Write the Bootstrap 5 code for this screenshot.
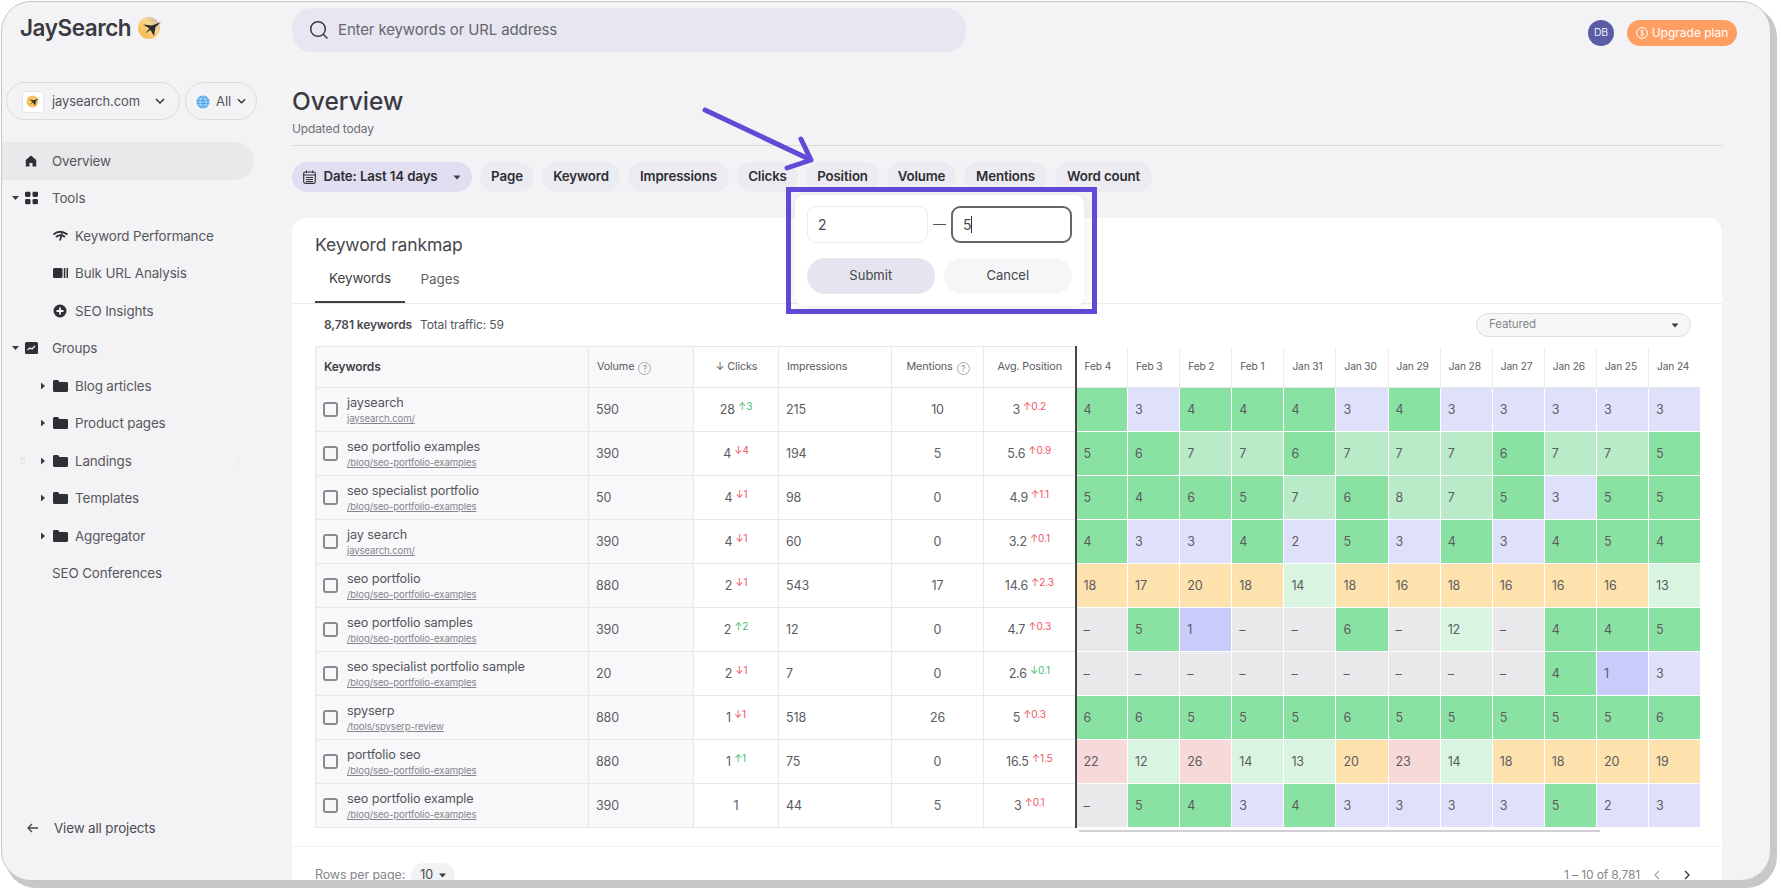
<!DOCTYPE html>
<html lang="en">
<head>
<meta charset="utf-8">
<title>JaySearch Overview</title>
<link href="https://cdn.jsdelivr.net/npm/bootstrap@5.3.0/dist/css/bootstrap.min.css" rel="stylesheet">
<style>
html,body{height:100%;overflow:hidden;background:#fff}
body{font-family:Inter,"Liberation Sans",sans-serif;font-size:13px;color:#55555a;letter-spacing:-.01em}
.shell{width:1770px;height:880px;margin:1px 0 0 1px;border:1px solid #c6c6c9;border-radius:30px;background:#f3f3f6;box-shadow:5px 6px 0 1px #c8c8ca;overflow:hidden;position:relative}
.side{width:290px;flex:0 0 290px;height:100%;padding-bottom:33px}
.logo-row{height:52px;margin-bottom:2px;padding-left:18px;gap:6px}
.logo-word{font-size:22.5px;font-weight:600;color:#3a3a40;letter-spacing:-.02em}
.sel-row{margin:26px 0 22px 4px;gap:5px;height:38px}
.sel-pill{height:38px;border:1px solid #dcdce0;border-radius:19px;color:#55555a;font-size:13px;gap:6px;padding-top:1px}
.sel-proj{width:174px;padding-right:14px;padding-left:15px}
.sel-all{width:72px;padding-right:10px;padding-left:10px}
.fav{width:22px;height:22px;background:#fff;border:1px solid #e6e6e8;border-radius:3px}
.tree-item{height:37.5px;font-size:13.4px;color:#57575c;padding-left:50px;position:relative}
.tree-item.on{background:#e9e9eb;border-radius:0 19px 19px 0;width:252px}
.tree-item.sub{padding-left:73px}
.t-ico{position:absolute;left:23px;top:50%;transform:translateY(-50%);display:block}
.sub .t-ico{left:51px}
.t-car{position:absolute;left:10px;top:50%;transform:translateY(-50%);display:block}
.sub .t-car{left:39px}
.back-row{height:37.5px;padding-left:25px;gap:16px;font-size:13.4px;color:#4c4c52;margin-top:auto}
.main-col{min-width:0;flex:1 1 0}
.topbar{height:50px;margin-top:6px;padding-right:33px}
.searchbox{width:674px;height:44px;background:#e7e7f1;border-radius:20px;padding-left:17px;gap:9px;font-size:15px;color:#66666c}
.ava{width:26px;height:26px;background:#5b5ba6;color:#e9e9ff;font-size:10.5px;margin-right:13px}
.upg{height:26px;width:110px;background:#ff9e63;color:#fff;font-size:12px;border-radius:13px;gap:4px;border:0;padding:0}
.work{margin-right:48px}
.pg-title{font-size:24.5px;font-weight:500;color:#3b3b41;margin:27px 0 0;line-height:32px;letter-spacing:0}
.pg-sub{font-size:12px;color:#6e6e74;margin-top:4px;line-height:16px}
.rule{border-top:1px solid #dadadd;margin-top:8px}
.chips{margin-top:16px;gap:8px;height:30px}
.chip{height:30px;border-radius:15px;background:#ebebf1;color:#2e2e33;font-size:13.3px;font-weight:600;padding:0;justify-content:center;display:flex;align-items:center}
.chip-date{width:180px;background:#e2def2;gap:7px}
.panel{margin-top:26px;background:#fff;border-radius:14px 14px 0 0;height:700px;position:relative}
.panel-title{font-size:17.5px;color:#47474d;padding:17px 0 0 23px;line-height:20px;font-weight:400;margin:0}
.tabs-row{border-bottom:1px solid #ebebee;height:49px;padding-left:23px}
.tabs-row .nav-link{height:48px;padding:0;color:#5f5f65;font-size:13.5px;display:flex;align-items:center;justify-content:center}
.tab-a{width:90px;color:#3f3f45!important;border-bottom:2px solid #3f3f45}
.tab-b{width:70px;margin-left:0}
.tool-row{height:42px;padding:0 31px 0 32px;font-size:12px}
.kw-num{font-weight:600;color:#4a4a50;margin-right:8px}
.feat{width:215px;height:24px;border:1px solid #dedee2;border-radius:12px;background:#f7f7f8;padding:0 11px 0 12px;color:#85858b;font-size:11.5px}
.rk-wrap{padding:0 23px}
.rk-table.table{table-layout:fixed;width:1385.2px;margin:0;--bs-table-bg:transparent;border-collapse:collapse;font-size:12.5px;color:#5c5c62}
.rk-table.table>thead>tr>th{height:41px;padding:0 7px 0 8px;font-weight:400;font-size:10.8px;border:1px solid #e8e8eb;vertical-align:middle;color:#5c5c62}
.rk-table.table>tbody>tr>td{height:44px;padding:2px 7px 0;border:1px solid #e8e8eb;vertical-align:middle}
.rk-table.table>tbody>tr>td.kw-c{padding:0 7px}
.rk-table.table>thead>tr>th.kw-h{font-weight:600;font-size:12px;color:#3f3f45}
.rk-table.table>*>tr>.soft{background:#f8f8fa}
.rk-table.table>*>tr>.avg{border-right:2px solid #45454a}
.rk-table.table>*>tr>.cen{text-align:center}
.rk-table.table>thead>tr>th.dt{border:0;border-left:1px solid #ececef;border-bottom:1px solid #e8e8eb;font-size:10.2px}
.rk-table.table>tbody>tr>td.hc{border:1px solid #fff}
.kw-wrap{gap:9px}
.tick{width:15px;height:15px;border:2px solid #8a8a8f;border-radius:3px;flex:none;margin:0;appearance:none;background:transparent}
.kw-t{font-size:12.7px;color:#55555a;line-height:15px;white-space:nowrap}
.kw-u{font-size:9.6px;color:#85858b;line-height:12px;text-decoration:underline;display:block;margin-top:3px;white-space:nowrap}
.qmark{display:inline-flex;width:13px;height:13px;border:1px solid #a9a9ae;border-radius:50%;font-size:8.5px;align-items:center;justify-content:center;color:#8b8b90;margin-left:4px;vertical-align:-2px}
.dl{font-size:10px;position:relative;top:-4px;margin-left:3px}
.up{color:#45bd6a}.dn{color:#f0555f}
.rk-table.table>tbody>tr>td.g1{background:#8ae2a2}
.rk-table.table>tbody>tr>td.g2{background:#b9ebc9}
.rk-table.table>tbody>tr>td.g3{background:#d9f5e2}
.rk-table.table>tbody>tr>td.p1{background:#dfe1fa}
.rk-table.table>tbody>tr>td.p2{background:#c9cbfb}
.rk-table.table>tbody>tr>td.o1{background:#fee2ae}
.rk-table.table>tbody>tr>td.r1{background:#f7d9da}
.rk-table.table>tbody>tr>td.n1{background:#e9e9eb}
.scrollish{height:2px;width:521px;background:#d0d0d3;margin:2px 0 0 764px}
.foot{border-top:1px solid #f0f0f2;margin-top:14px;padding:16px 23px 0;font-size:12.5px;color:#85858b}
.pager-txt{font-size:12px}
.chev-l{margin-left:13px}
.rows-chip{width:44px;height:24px;border-radius:12px;background:#f2f2f4;color:#45454a;margin-left:6px;gap:6px}
.pop-wrap{position:absolute;left:784px;top:185px;width:311px;height:127px;border:5px solid #5f4bd6;padding:3px 8px 3px 4px}
.pop-card{width:100%;height:100%;background:#fff;border-radius:9px;padding:11px 12px;box-shadow:0 4px 14px rgba(40,40,60,.08)}
.range{gap:5px;height:37px}
.num-box{width:121px;height:37px;border:1px solid #ececee;border-radius:9px;font-size:14px;color:#4a4a50;padding:0 10px;background:#fff;box-shadow:none}
.num-on{border:2px solid #66666a;display:flex;align-items:center}
.caret-bar{display:inline-block;width:1px;height:17px;background:#333}
.pop-btns{margin-top:15px;gap:9px}
.btn-sub,.btn-can{height:36px;border-radius:18px;border:0;font-size:13px;color:#46464c;padding:0}
.btn-sub{width:128px;background:#e5e5f0}
.btn-can{width:129px;background:#f6f6f8}
.arrow-mark{position:absolute;left:695px;top:100px}
.handle{position:absolute;top:50%;transform:translateY(-50%);color:#dcdce0;font-size:10px;line-height:1}
</style>
</head>
<body>
<div class="shell d-flex">
  <aside class="side d-flex flex-column">
    <div class="logo-row d-flex align-items-center">
      <span class="logo-word">JaySearch</span>
      <svg width="26" height="24" viewBox="0 0 26 24"><defs><linearGradient id="lg" x1="0" y1="1" x2="1" y2="0"><stop offset="0" stop-color="#fbb03b"/><stop offset=".6" stop-color="#f9d58a"/><stop offset="1" stop-color="#b9b0c0"/></linearGradient></defs><circle cx="12" cy="12" r="11" fill="url(#lg)"/><path d="M6 8.500L15 9.500 24 6 18.500 11 17 20 13.500 14 8 17.500 12.500 12.500z" fill="#2b2b30"/></svg>
    </div>
    <div class="sel-row d-flex">
      <div class="sel-pill sel-proj d-flex align-items-center justify-content-between">
        <span class="d-flex align-items-center gap-2"><span class="fav d-flex align-items-center justify-content-center"><svg width="14" height="13" viewBox="0 0 26 24"><circle cx="12" cy="12" r="11" fill="#f9c25d"/><path d="M6 8.500L15 9.500 24 6 18.500 11 17 20 13.500 14 8 17.500 12.500 12.500z" fill="#2b2b30"/></svg></span>jaysearch.com</span>
        <svg width="10" height="7" viewBox="0 0 10 7"><path d="M1 1l4 4 4-4" fill="none" stroke="#333" stroke-width="1.5"/></svg>
      </div>
      <div class="sel-pill sel-all d-flex align-items-center justify-content-between">
        <svg width="14" height="14" viewBox="0 0 14 14"><circle cx="7" cy="7" r="6.5" fill="#4aa3e8"/><path d="M.5 7h13M7 .5c-4 4-4 9 0 13M7 .5c4 4 4 9 0 13M1.5 4h11M1.5 10h11" fill="none" stroke="#d5ecfb" stroke-width=".7"/></svg>
        <span>All</span>
        <svg width="9" height="7" viewBox="0 0 10 7"><path d="M1 1l4 4 4-4" fill="none" stroke="#333" stroke-width="1.5"/></svg>
      </div>
    </div>
    <div class="tree-item on d-flex align-items-center"><svg class="t-ico" width="12" height="12" viewBox="0 0 12 12"><path d="M6 .5L.8 5v6.5h3.7V8h3v3.5h3.7V5z" fill="#2f2f35"/></svg>Overview</div>
    <div class="tree-item d-flex align-items-center"><svg class="t-car" width="7" height="5" viewBox="0 0 7 5"><path d="M0 .5h7L3.5 4.5z" fill="#3a3a40"/></svg><svg class="t-ico" width="13" height="13" viewBox="0 0 13 13"><g fill="#2f2f35"><rect x="0" y="0" width="5.5" height="5.5" rx="1.4"/><rect x="7.5" y="0" width="5.5" height="5.5" rx="1.4"/><rect x="0" y="7.5" width="5.5" height="5.5" rx="1.4"/><rect x="7.5" y="7.5" width="5.5" height="5.5" rx="1.4"/></g></svg>Tools</div>
    <div class="tree-item sub d-flex align-items-center"><svg class="t-ico" width="15" height="11" viewBox="0 0 15 11"><path d="M.5 4c4-3.500 9-3.500 14 0M3 6.500c3-2.500 6-2.500 9 0M7 10l2-7" fill="none" stroke="#2f2f35" stroke-width="1.800"/></svg>Keyword Performance</div>
    <div class="tree-item sub d-flex align-items-center"><svg class="t-ico" width="15" height="10" viewBox="0 0 15 10"><rect width="9.500" height="10" rx="1.500" fill="#2f2f35"/><rect x="10.800" width="1.500" height="10" fill="#2f2f35"/><rect x="13.500" width="1.500" height="10" fill="#2f2f35"/></svg>Bulk URL Analysis</div>
    <div class="tree-item sub d-flex align-items-center"><svg class="t-ico" width="14" height="14" viewBox="0 0 14 14"><circle cx="7" cy="7" r="6.500" fill="#2f2f35"/><path d="M7 3.500v7M3.500 7h7" stroke="#f3f3f6" stroke-width="1.800"/></svg>SEO Insights</div>
    <div class="tree-item d-flex align-items-center"><svg class="t-car" width="7" height="5" viewBox="0 0 7 5"><path d="M0 .5h7L3.500 4.500z" fill="#3a3a40"/></svg><svg class="t-ico" width="13" height="12" viewBox="0 0 13 12"><rect width="13" height="12" rx="1.500" fill="#2f2f35"/><path d="M2.500 8l2.500-2 2 1 3-3" fill="none" stroke="#f3f3f6" stroke-width="1.200"/></svg>Groups</div>
    <div class="tree-item sub d-flex align-items-center"><svg class="t-car" width="4" height="7" viewBox="0 0 4 7"><path d="M0 0l4 3.500L0 7z" fill="#3a3a40"/></svg><svg class="t-ico" width="15" height="12" viewBox="0 0 15 12"><path d="M0 1.500C0 .7.600 0 1.500 0h3.500l1.500 2h7C14.400 2 15 2.700 15 3.500v7c0 .8-.6 1.500-1.500 1.500h-12C.600 12 0 11.300 0 10.500z" fill="#2f2f35"/></svg>Blog articles</div>
    <div class="tree-item sub d-flex align-items-center"><svg class="t-car" width="4" height="7" viewBox="0 0 4 7"><path d="M0 0l4 3.500L0 7z" fill="#3a3a40"/></svg><svg class="t-ico" width="15" height="12" viewBox="0 0 15 12"><path d="M0 1.500C0 .7.600 0 1.500 0h3.500l1.500 2h7C14.400 2 15 2.700 15 3.500v7c0 .8-.6 1.500-1.500 1.500h-12C.600 12 0 11.300 0 10.500z" fill="#2f2f35"/></svg>Product pages</div>
    <div class="tree-item sub d-flex align-items-center"><span class="handle" style="left:17px">⠿</span><svg class="t-car" width="4" height="7" viewBox="0 0 4 7"><path d="M0 0l4 3.500L0 7z" fill="#3a3a40"/></svg><svg class="t-ico" width="15" height="12" viewBox="0 0 15 12"><path d="M0 1.500C0 .7.600 0 1.500 0h3.500l1.500 2h7C14.400 2 15 2.700 15 3.500v7c0 .8-.6 1.500-1.500 1.500h-12C.600 12 0 11.300 0 10.500z" fill="#2f2f35"/></svg>Landings<span class="handle" style="left:231px">⋮</span></div>
    <div class="tree-item sub d-flex align-items-center"><svg class="t-car" width="4" height="7" viewBox="0 0 4 7"><path d="M0 0l4 3.500L0 7z" fill="#3a3a40"/></svg><svg class="t-ico" width="15" height="12" viewBox="0 0 15 12"><path d="M0 1.500C0 .7.600 0 1.500 0h3.500l1.500 2h7C14.400 2 15 2.700 15 3.500v7c0 .8-.6 1.500-1.500 1.500h-12C.600 12 0 11.300 0 10.500z" fill="#2f2f35"/></svg>Templates</div>
    <div class="tree-item sub d-flex align-items-center"><svg class="t-car" width="4" height="7" viewBox="0 0 4 7"><path d="M0 0l4 3.500L0 7z" fill="#3a3a40"/></svg><svg class="t-ico" width="15" height="12" viewBox="0 0 15 12"><path d="M0 1.500C0 .7.600 0 1.500 0h3.500l1.500 2h7C14.400 2 15 2.700 15 3.500v7c0 .8-.6 1.500-1.500 1.500h-12C.600 12 0 11.300 0 10.500z" fill="#2f2f35"/></svg>Aggregator</div>
    <div class="tree-item d-flex align-items-center">SEO Conferences</div>
    <div class="back-row d-flex align-items-center"><svg width="11" height="10" viewBox="0 0 11 10"><path d="M5 1L1 5l4 4M1 5h10" fill="none" stroke="#444" stroke-width="1.300"/></svg>View all projects</div>
  </aside>
  <div class="main-col">
    <div class="topbar d-flex align-items-start justify-content-between">
      <div class="searchbox d-flex align-items-center"><svg width="20" height="20" viewBox="0 0 20 20"><circle cx="9" cy="9" r="7.300" fill="none" stroke="#3a3a40" stroke-width="1.500"/><path d="M14.500 14.500l4 4" stroke="#3a3a40" stroke-width="1.500"/></svg>Enter keywords or URL address</div>
      <div class="d-flex align-items-center mt-2 pt-1">
        <span class="ava rounded-circle d-flex align-items-center justify-content-center">DB</span>
        <button type="button" class="upg btn d-flex align-items-center justify-content-center"><svg width="12" height="12" viewBox="0 0 12 12"><circle cx="6" cy="6" r="5.400" fill="none" stroke="#fff"/><path d="M7.800 4.200C7.300 3.400 4.500 3.200 4.500 4.600S7.800 5.700 7.800 7.300 4.700 8.700 4.200 7.800M6 2.500v7" fill="none" stroke="#fff" stroke-width=".7"/></svg>Upgrade plan</button>
      </div>
    </div>
    <div class="work">
      <h1 class="pg-title">Overview</h1>
      <div class="pg-sub">Updated today</div>
      <div class="rule"></div>
      <div class="chips d-flex">
        <div class="chip chip-date"><svg width="13" height="14" viewBox="0 0 13 14"><rect x=".7" y="2" width="11.600" height="11.300" rx="1.500" fill="none" stroke="#333" stroke-width="1.200"/><path d="M.7 5h11.600M3.500 .5v2.500M9.500 .5v2.500M3 7.500h7M3 9.500h7M3 11.500h7" stroke="#333"/></svg>Date: Last 14 days<svg class="ms-2" width="8" height="5" viewBox="0 0 7 5"><path d="M0 .5h7L3.500 4.500z" fill="#3a3a40"/></svg></div>
        <div class="chip" style="width:54px">Page</div>
        <div class="chip" style="width:78px">Keyword</div>
        <div class="chip" style="width:101px">Impressions</div>
        <div class="chip" style="width:61px">Clicks</div>
        <div class="chip" style="width:73px">Position</div>
        <div class="chip" style="width:69px">Volume</div>
        <div class="chip" style="width:83px">Mentions</div>
        <div class="chip" style="width:97px">Word count</div>
      </div>
      <section class="panel">
        <h2 class="panel-title">Keyword rankmap</h2>
        <ul class="nav tabs-row">
          <li class="nav-item"><a class="nav-link tab-a" href="#">Keywords</a></li>
          <li class="nav-item"><a class="nav-link tab-b" href="#">Pages</a></li>
        </ul>
        <div class="tool-row d-flex align-items-center justify-content-between">
          <div><span class="kw-num">8,781 keywords</span>Total traffic: 59</div>
          <div class="feat d-flex align-items-center justify-content-between">Featured<svg width="8" height="5" viewBox="0 0 7 5"><path d="M0 .5h7L3.500 4.500z" fill="#3a3a40"/></svg></div>
        </div>
        <div class="rk-wrap">
          <table class="table rk-table">
            <colgroup><col style="width:273px"><col style="width:105px"><col style="width:85px"><col style="width:113px"><col style="width:92px"><col style="width:92px"><col span="12" style="width:52.1px"></colgroup>
            <thead><tr>
              <th class="soft kw-h">Keywords</th><th class="soft">Volume<span class="qmark">?</span></th><th class="cen">↓ Clicks</th><th>Impressions</th><th class="cen">Mentions<span class="qmark">?</span></th><th class="cen avg">Avg. Position</th>
              <th class="dt">Feb 4</th><th class="dt">Feb 3</th><th class="dt">Feb 2</th><th class="dt">Feb 1</th><th class="dt">Jan 31</th><th class="dt">Jan 30</th><th class="dt">Jan 29</th><th class="dt">Jan 28</th><th class="dt">Jan 27</th><th class="dt">Jan 26</th><th class="dt">Jan 25</th><th class="dt">Jan 24</th>
            </tr></thead>
            <tbody>
              <tr><td class="soft kw-c"><div class="kw-wrap d-flex align-items-center"><input class="tick" type="checkbox"><div><div class="kw-t">jaysearch</div><a class="kw-u" href="#">jaysearch.com/</a></div></div></td><td class="soft">590</td><td class="cen">28<span class="dl up">↑3</span></td><td>215</td><td class="cen">10</td><td class="cen avg">3<span class="dl dn">↑0.2</span></td><td class="hc g1">4</td><td class="hc p1">3</td><td class="hc g1">4</td><td class="hc g1">4</td><td class="hc g1">4</td><td class="hc p1">3</td><td class="hc g1">4</td><td class="hc p1">3</td><td class="hc p1">3</td><td class="hc p1">3</td><td class="hc p1">3</td><td class="hc p1">3</td></tr>
              <tr><td class="soft kw-c"><div class="kw-wrap d-flex align-items-center"><input class="tick" type="checkbox"><div><div class="kw-t">seo portfolio examples</div><a class="kw-u" href="#">/blog/seo-portfolio-examples</a></div></div></td><td class="soft">390</td><td class="cen">4<span class="dl dn">↓4</span></td><td>194</td><td class="cen">5</td><td class="cen avg">5.6<span class="dl dn">↑0.9</span></td><td class="hc g1">5</td><td class="hc g1">6</td><td class="hc g2">7</td><td class="hc g2">7</td><td class="hc g1">6</td><td class="hc g2">7</td><td class="hc g2">7</td><td class="hc g2">7</td><td class="hc g1">6</td><td class="hc g2">7</td><td class="hc g2">7</td><td class="hc g1">5</td></tr>
              <tr><td class="soft kw-c"><div class="kw-wrap d-flex align-items-center"><input class="tick" type="checkbox"><div><div class="kw-t">seo specialist portfolio</div><a class="kw-u" href="#">/blog/seo-portfolio-examples</a></div></div></td><td class="soft">50</td><td class="cen">4<span class="dl dn">↓1</span></td><td>98</td><td class="cen">0</td><td class="cen avg">4.9<span class="dl dn">↑1.1</span></td><td class="hc g1">5</td><td class="hc g1">4</td><td class="hc g1">6</td><td class="hc g1">5</td><td class="hc g2">7</td><td class="hc g1">6</td><td class="hc g2">8</td><td class="hc g2">7</td><td class="hc g1">5</td><td class="hc p1">3</td><td class="hc g1">5</td><td class="hc g1">5</td></tr>
              <tr><td class="soft kw-c"><div class="kw-wrap d-flex align-items-center"><input class="tick" type="checkbox"><div><div class="kw-t">jay search</div><a class="kw-u" href="#">jaysearch.com/</a></div></div></td><td class="soft">390</td><td class="cen">4<span class="dl dn">↓1</span></td><td>60</td><td class="cen">0</td><td class="cen avg">3.2<span class="dl dn">↑0.1</span></td><td class="hc g1">4</td><td class="hc p1">3</td><td class="hc p1">3</td><td class="hc g1">4</td><td class="hc p1">2</td><td class="hc g1">5</td><td class="hc p1">3</td><td class="hc g1">4</td><td class="hc p1">3</td><td class="hc g1">4</td><td class="hc g1">5</td><td class="hc g1">4</td></tr>
              <tr><td class="soft kw-c"><div class="kw-wrap d-flex align-items-center"><input class="tick" type="checkbox"><div><div class="kw-t">seo portfolio</div><a class="kw-u" href="#">/blog/seo-portfolio-examples</a></div></div></td><td class="soft">880</td><td class="cen">2<span class="dl dn">↓1</span></td><td>543</td><td class="cen">17</td><td class="cen avg">14.6<span class="dl dn">↑2.3</span></td><td class="hc o1">18</td><td class="hc o1">17</td><td class="hc o1">20</td><td class="hc o1">18</td><td class="hc g3">14</td><td class="hc o1">18</td><td class="hc o1">16</td><td class="hc o1">18</td><td class="hc o1">16</td><td class="hc o1">16</td><td class="hc o1">16</td><td class="hc g3">13</td></tr>
              <tr><td class="soft kw-c"><div class="kw-wrap d-flex align-items-center"><input class="tick" type="checkbox"><div><div class="kw-t">seo portfolio samples</div><a class="kw-u" href="#">/blog/seo-portfolio-examples</a></div></div></td><td class="soft">390</td><td class="cen">2<span class="dl up">↑2</span></td><td>12</td><td class="cen">0</td><td class="cen avg">4.7<span class="dl dn">↑0.3</span></td><td class="hc n1">–</td><td class="hc g1">5</td><td class="hc p2">1</td><td class="hc n1">–</td><td class="hc n1">–</td><td class="hc g1">6</td><td class="hc n1">–</td><td class="hc g3">12</td><td class="hc n1">–</td><td class="hc g1">4</td><td class="hc g1">4</td><td class="hc g1">5</td></tr>
              <tr><td class="soft kw-c"><div class="kw-wrap d-flex align-items-center"><input class="tick" type="checkbox"><div><div class="kw-t">seo specialist portfolio sample</div><a class="kw-u" href="#">/blog/seo-portfolio-examples</a></div></div></td><td class="soft">20</td><td class="cen">2<span class="dl dn">↓1</span></td><td>7</td><td class="cen">0</td><td class="cen avg">2.6<span class="dl up">↓0.1</span></td><td class="hc n1">–</td><td class="hc n1">–</td><td class="hc n1">–</td><td class="hc n1">–</td><td class="hc n1">–</td><td class="hc n1">–</td><td class="hc n1">–</td><td class="hc n1">–</td><td class="hc n1">–</td><td class="hc g1">4</td><td class="hc p2">1</td><td class="hc p1">3</td></tr>
              <tr><td class="soft kw-c"><div class="kw-wrap d-flex align-items-center"><input class="tick" type="checkbox"><div><div class="kw-t">spyserp</div><a class="kw-u" href="#">/tools/spyserp-review</a></div></div></td><td class="soft">880</td><td class="cen">1<span class="dl dn">↓1</span></td><td>518</td><td class="cen">26</td><td class="cen avg">5<span class="dl dn">↑0.3</span></td><td class="hc g1">6</td><td class="hc g1">6</td><td class="hc g1">5</td><td class="hc g1">5</td><td class="hc g1">5</td><td class="hc g1">6</td><td class="hc g1">5</td><td class="hc g1">5</td><td class="hc g1">5</td><td class="hc g1">5</td><td class="hc g1">5</td><td class="hc g1">6</td></tr>
              <tr><td class="soft kw-c"><div class="kw-wrap d-flex align-items-center"><input class="tick" type="checkbox"><div><div class="kw-t">portfolio seo</div><a class="kw-u" href="#">/blog/seo-portfolio-examples</a></div></div></td><td class="soft">880</td><td class="cen">1<span class="dl up">↑1</span></td><td>75</td><td class="cen">0</td><td class="cen avg">16.5<span class="dl dn">↑1.5</span></td><td class="hc r1">22</td><td class="hc g3">12</td><td class="hc r1">26</td><td class="hc g3">14</td><td class="hc g3">13</td><td class="hc o1">20</td><td class="hc r1">23</td><td class="hc g3">14</td><td class="hc o1">18</td><td class="hc o1">18</td><td class="hc o1">20</td><td class="hc o1">19</td></tr>
              <tr><td class="soft kw-c"><div class="kw-wrap d-flex align-items-center"><input class="tick" type="checkbox"><div><div class="kw-t">seo portfolio example</div><a class="kw-u" href="#">/blog/seo-portfolio-examples</a></div></div></td><td class="soft">390</td><td class="cen">1</td><td>44</td><td class="cen">5</td><td class="cen avg">3<span class="dl dn">↑0.1</span></td><td class="hc n1">–</td><td class="hc g1">5</td><td class="hc g1">4</td><td class="hc p1">3</td><td class="hc g1">4</td><td class="hc p1">3</td><td class="hc p1">3</td><td class="hc p1">3</td><td class="hc p1">3</td><td class="hc g1">5</td><td class="hc p1">2</td><td class="hc p1">3</td></tr>
            </tbody>
          </table>
          <div class="scrollish"></div>
        </div>
        <div class="foot d-flex align-items-center justify-content-between">
          <div class="d-flex align-items-center">Rows per page:<span class="rows-chip d-flex align-items-center justify-content-center">10<svg width="7" height="5" viewBox="0 0 7 5"><path d="M0 .5h7L3.500 4.500z" fill="#3a3a40"/></svg></span></div>
          <div class="d-flex align-items-center me-2"><span class="pager-txt">1 – 10 of 8,781</span><svg class="chev-l" width="7" height="10" viewBox="0 0 7 10"><path d="M6 1L2 5l4 4" fill="none" stroke="#aaa" stroke-width="1.300"/></svg><svg class="ms-4" width="7" height="10" viewBox="0 0 7 10"><path d="M1 1l4 4-4 4" fill="none" stroke="#333" stroke-width="1.300"/></svg></div>
        </div>
      </section>
    </div>
  </div>
  <svg class="arrow-mark" width="125" height="75" viewBox="0 0 125 75"><path d="M8 8L114 58M104 37L114 58L90 66" fill="none" stroke="#5f4bd6" stroke-width="5" stroke-linecap="round" stroke-linejoin="round"/></svg>
  <div class="pop-wrap">
    <div class="pop-card">
      <div class="range d-flex align-items-center">
        <input class="form-control num-box" type="text" value="2" aria-label="From">
        <span>—</span>
        <div class="form-control num-box num-on">5<span class="caret-bar"></span></div>
      </div>
      <div class="pop-btns d-flex">
        <button type="button" class="btn btn-sub">Submit</button>
        <button type="button" class="btn btn-can">Cancel</button>
      </div>
    </div>
  </div>
</div>
<script src="https://cdn.jsdelivr.net/npm/bootstrap@5.3.0/dist/js/bootstrap.bundle.min.js"></script>
</body>
</html>
